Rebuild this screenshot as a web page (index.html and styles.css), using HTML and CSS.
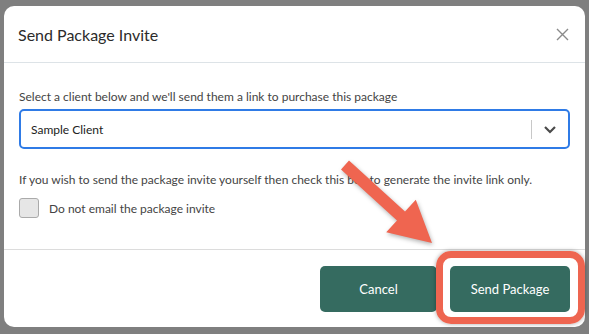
FILE: index.html
```html
<!DOCTYPE html>
<html lang="en">
<head>
    <meta charset="UTF-8">
    <meta name="viewport" content="width=device-width, initial-scale=1.0">
    <title>Send Package Invite</title>
    <link rel="stylesheet" href="styles.css">
</head>
<body>
    <div class="modal">
        <div class="modal-header">
            <h2>Send Package Invite</h2>
            <button class="close" aria-label="Close">
                <svg width="13" height="13" viewBox="0 0 13 13"><path d="M1 1L12 12M12 1L1 12" stroke="#8a8a8a" stroke-width="1.4" fill="none"/></svg>
            </button>
        </div>

        <div class="modal-body">
            <p class="label">Select a client below and we'll send them a link to purchase this package</p>
            <div class="select">
                <span class="select-value">Sample Client</span>
                <span class="select-sep"></span>
                <span class="select-arrow">
                    <svg width="14" height="9" viewBox="0 0 14 9"><path d="M2 2L7 7L12 2" stroke="#4a4a4a" stroke-width="2.2" fill="none"/></svg>
                </span>
            </div>

            <p class="hint">If you wish to send the package invite yourself then check this box to generate the invite link only.</p>
            <label class="check">
                <span class="checkbox"></span>
                Do not email the package invite
            </label>
        </div>

        <div class="modal-footer">
            <button class="btn">Cancel</button>
            <button class="btn btn-send">Send Package</button>
        </div>
    </div>

    <!-- annotation overlay -->
    <div class="highlight"></div>
    <svg class="arrow" width="589" height="334" viewBox="0 0 589 334">
        <polygon points="349,160.6 405,211.6 415.8,199.7 432,243 386.2,232.3 397,220.4 341,169.4" fill="#ef6550"/>
    </svg>
</body>
</html>
```

FILE: styles.css
```css
body {
    margin: 0;
    padding: 6px 4px 7px 4px;
    background-color: #7f7f7f;
    font-family: Lato, "Open Sans", sans-serif;
    color: #333;
}
.modal {
    height: 321px;
    background-color: #fff;
    border-radius: 10px;
    display: flex;
    flex-direction: column;
}
.modal-header {
    height: 56px;
    border-bottom: 1px solid #dde3e7;
    display: flex;
    align-items: center;
    justify-content: space-between;
    padding: 0 16px 0 14px;
}
.modal-header h2 {
    margin: 0;
    font-size: 16px;
    font-weight: 400;
    color: #2b2b2b;
}
.close {
    border: none;
    background: none;
    padding: 0;
    width: 13px;
    height: 13px;
    display: flex;
}
.modal-body {
    flex: 1;
    padding: 25px 15px 0 15px;
    border-bottom: 1px solid #dcdcdc;
}
.label, .hint {
    margin: 0;
    font-size: 12px;
    line-height: 17px;
    color: #444;
}
.select {
    margin-top: 4px;
    height: 36px;
    border: 2px solid #2f7be6;
    border-radius: 5px;
    display: flex;
    align-items: center;
}
.select-value {
    flex: 1;
    padding-left: 10px;
    font-size: 12px;
    color: #222;
}
.select-sep {
    width: 1px;
    height: 19px;
    background-color: #c8c8c8;
}
.select-arrow {
    width: 36px;
    display: flex;
    justify-content: center;
}
.hint {
    margin-top: 22px;
}
.check {
    margin-top: 10px;
    display: flex;
    align-items: center;
    gap: 10px;
    font-size: 12px;
    color: #444;
}
.checkbox {
    width: 18px;
    height: 18px;
    border: 1px solid #aaa;
    border-radius: 3px;
    background-color: #e6e6e6;
}
.modal-footer {
    height: 77px;
    display: flex;
    justify-content: flex-end;
    align-items: flex-start;
    gap: 13px;
    padding: 16px 15px 0 0;
    box-sizing: border-box;
}
.btn {
    width: 117px;
    height: 46px;
    border: none;
    border-radius: 5px;
    background-color: #356b60;
    color: #fff;
    font-family: inherit;
    font-size: 13px;
}
.btn-send {
    width: 120px;
}
.highlight {
    position: absolute;
    left: 436px;
    top: 251px;
    width: 135px;
    height: 59px;
    border: 7px solid #ee6550;
    border-radius: 15px;
    box-shadow: 0 0 4px rgba(0,0,0,0.35);
}
.arrow {
    position: absolute;
    left: 0;
    top: 0;
    filter: drop-shadow(1px 2px 2px rgba(0,0,0,0.3));
}
```
